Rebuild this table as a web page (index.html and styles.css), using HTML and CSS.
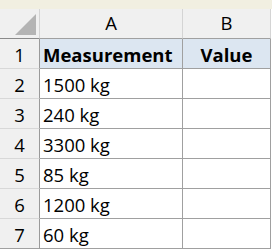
FILE: index.html
```html
<!DOCTYPE html>
<html>
<head>
<meta charset="utf-8">
<link rel="stylesheet" href="styles.css">
</head>
<body>
<div class="strip"></div>
<div class="sheet">
  <div class="cell corner"><svg width="21" height="21" viewBox="0 0 21 21"><polygon points="21,0 21,21 0,21" fill="#b4b4b4"/></svg></div>
  <div class="cell colhead">A</div>
  <div class="cell colhead">B</div>

  <div class="cell rowhead">1</div>
  <div class="cell data title">Measurement</div>
  <div class="cell data title center">Value</div>

  <div class="cell rowhead">2</div>
  <div class="cell data">1500 kg</div>
  <div class="cell data"></div>

  <div class="cell rowhead">3</div>
  <div class="cell data">240 kg</div>
  <div class="cell data"></div>

  <div class="cell rowhead">4</div>
  <div class="cell data">3300 kg</div>
  <div class="cell data"></div>

  <div class="cell rowhead">5</div>
  <div class="cell data">85 kg</div>
  <div class="cell data"></div>

  <div class="cell rowhead">6</div>
  <div class="cell data">1200 kg</div>
  <div class="cell data"></div>

  <div class="cell rowhead last">7</div>
  <div class="cell data">60 kg</div>
  <div class="cell data"></div>
</div>
</body>
</html>
```
FILE: styles.css
```css
html, body {
  margin: 0;
  padding: 0;
  background: #ffffff;
}
body {
  font-family: "Open Sans", "Liberation Sans", sans-serif;
  font-size: 18.5px;
  color: #000;
}
.strip {
  height: 9px;
  background: #f1efe1;
}
.sheet {
  display: grid;
  grid-template-columns: 40px 143px 88px;
  grid-auto-rows: 30px;
  width: 271px;
}
.cell {
  box-sizing: border-box;
  border-right: 1px solid #a0a0a0;
  border-bottom: 1px solid #a0a0a0;
  line-height: 27px;
  padding-top: 2px;
  white-space: nowrap;
  overflow: hidden;
}
.corner {
  background: #f0f0f0;
  border-right-color: #d4d4d4;
  border-bottom-color: #8a8a8a;
  display: flex;
  justify-content: flex-end;
  align-items: flex-end;
  padding: 0 3px 3px 0;
}
.corner svg {
  display: block;
}
.colhead {
  background: #f0f0f0;
  text-align: center;
  border-right-color: #d4d4d4;
  border-bottom-color: #a0a0a0;
  line-height: 26px;
  padding-top: 1px;
}
.rowhead {
  background: #f0f0f0;
  text-align: center;
  border-bottom-color: #d8d8d8;
  border-right-color: #9a9a9a;
}
.rowhead.last {
  border-bottom-color: #a0a0a0;
}
.data {
  padding-left: 3px;
}
.title {
  background: #dce6f1;
  font-weight: 700;
}
.center {
  text-align: center;
  padding-left: 0;
}
```
